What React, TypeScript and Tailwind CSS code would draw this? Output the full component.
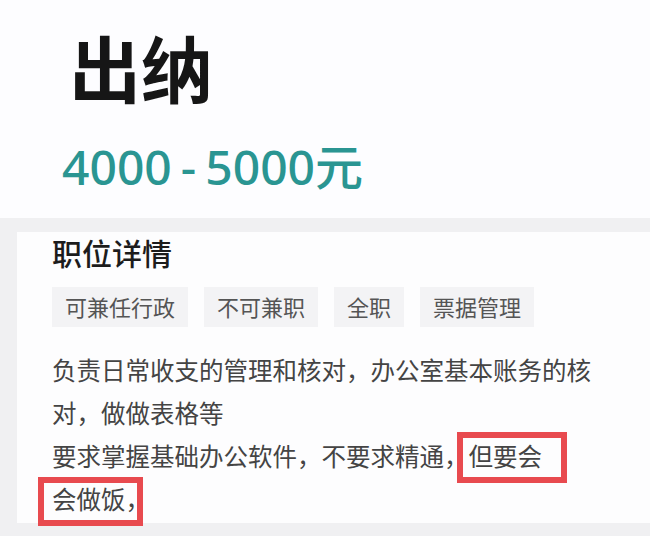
const cjk = '"Noto Sans", "Noto Sans CJK SC", sans-serif';

const tags = ['可兼任行政', '不可兼职', '全职', '票据管理'];

export default function App() {
  return (
    <div
      className="w-[650px] h-[536px] overflow-hidden bg-[#f0f0f2] text-[#1a1a1a]"
      style={{ fontFamily: cjk }}
    >
      <div className="h-[218px] bg-[#fdfdff] pl-[69px] pt-[32px]">
        <h1 className="text-[72px] leading-[74px] font-bold text-[#161616]">出纳</h1>
        <div className="mt-[37px] ml-[-7px] flex items-center text-[48px] leading-[48px] font-medium text-[#2a9592]">
          <span>4000</span>
          <span className="mx-[9px]">-</span>
          <span>5000元</span>
        </div>
      </div>

      <div className="relative mt-[14px] ml-[17px] h-[291px] bg-[#fdfdfe] pl-[35px] pt-[4px]">
        <h2 className="text-[30px] leading-[36px] font-medium text-[#1c1c1c]">职位详情</h2>

        <div className="mt-[15px] flex gap-[16px]">
          {tags.map((t) => (
            <span
              key={t}
              className="h-[40px] px-[13px] flex items-center bg-[#f3f3f5] text-[22px] text-[#555]"
            >
              {t}
            </span>
          ))}
        </div>

        <div className="mt-[22px] text-[24.5px] leading-[43px] text-[#444] whitespace-nowrap">
          <div>负责日常收支的管理和核对，办公室基本账务的核</div>
          <div>对，做做表格等</div>
          <div>要求掌握基础办公软件，不要求精通，但要会</div>
          <div>会做饭，</div>
        </div>

        <div className="absolute left-[440px] top-[200px] w-[110px] h-[51px] border-[6px] border-[#e84a4f]" />
        <div className="absolute left-[21px] top-[245px] w-[105px] h-[49px] border-[6px] border-[#e84a4f]" />
      </div>
    </div>
  );
}
